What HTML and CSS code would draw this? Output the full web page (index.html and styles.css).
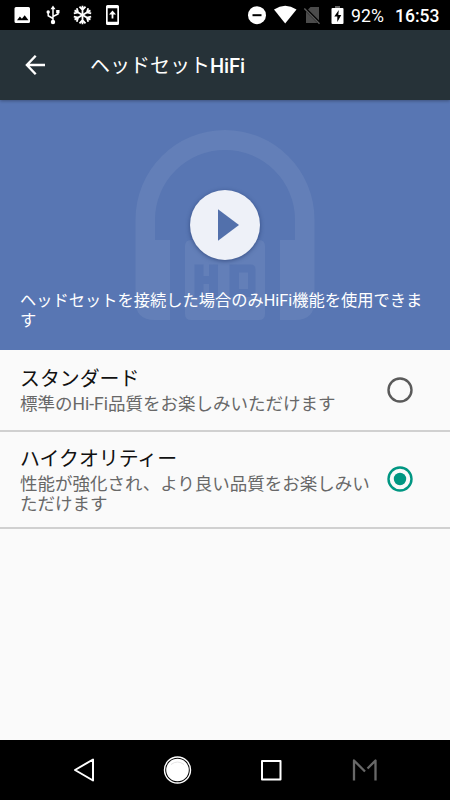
FILE: index.html
```html
<!DOCTYPE html>
<html lang="ja">
<head>
<meta charset="utf-8">
<title>ヘッドセットHiFi</title>
<link rel="stylesheet" href="styles.css">
</head>
<body>
<div class="screen">
  <header class="status">
    <svg class="status-icons" width="130" height="30" viewBox="0 0 130 30">
      <path fill="#fff" fill-rule="evenodd" d="M16 7h12.500q1.500 0 1.500 1.500v13q0 1.500-1.500 1.500H16q-1.500 0-1.500-1.500v-13Q14.500 7 16 7zM17 20.300h11.500l-3.800-5-2.800 3.400-2-2.300z"/>
      <g fill="none" stroke="#fff" stroke-width="1.500"><path d="M53 8v13M53 18.500l-4.800-2.800V12M53 16.500l5-2.500V11"/></g>
      <path fill="#fff" d="M53 5.500l2.500 3.800h-5zM56.200 10h3.300v3.300h-3.300z"/><circle cx="48.200" cy="12" r="1.700" fill="#fff"/><circle cx="53" cy="22" r="2.200" fill="#fff"/>
      <g fill="none" stroke="#fff" stroke-width="1.800">
        <g id="arm"><path d="M82.500 15V5.800M79.500 6.700l3 3.200 3-3.200"/></g>
        <use href="#arm" transform="rotate(60 82.500 15)"/><use href="#arm" transform="rotate(120 82.500 15)"/><use href="#arm" transform="rotate(180 82.500 15)"/><use href="#arm" transform="rotate(240 82.500 15)"/><use href="#arm" transform="rotate(300 82.500 15)"/>
      </g>
      <path fill="#fff" fill-rule="evenodd" d="M107.500 5h10q1.500 0 1.500 1.500v17q0 1.500-1.500 1.500h-10q-1.500 0-1.500-1.500v-17q0-1.500 1.500-1.500zM107.700 8.300v13.400h9.600V8.300z"/>
      <path fill="#fff" d="M112.500 10.500l3.500 4h-2.600v4h-1.800v-4H109z"/>
    </svg>
    <div class="status-right">
      <svg width="100" height="30" viewBox="246 0 100 30">
        <circle cx="257" cy="15.200" r="9" fill="#fff"/><path d="M252.500 15.200h9" stroke="#000" stroke-width="2"/>
        <path fill="#fff" d="M274 9.500Q285.200 2.200 296.500 9.500L285.200 23.500z"/>
        <path fill="#4b4b4b" d="M310.500 7h8.500v16h-13V11.500z"/><path d="M304 7.500L320 23.500" stroke="#000" stroke-width="3"/><path d="M304.300 8.500L319.500 23.700" stroke="#5b5b5b" stroke-width="1.400"/>
        <path fill="#666" d="M335 6h5v2.500h-5z"/><rect x="331.500" y="8" width="12" height="16" rx="1" fill="#fff"/><path d="M338.800 10l-4.500 6.500h3V22l4-7h-3z"/>
      </svg>
      <span class="battery">92%</span>
      <span class="clock">16:53</span>
    </div>
  </header>
  <div class="appbar">
    <svg class="back" width="22" height="22" viewBox="0 0 22 22"><path d="M20 11H2.500M10.700 1.700L1.900 11l8.800 9.300" fill="none" stroke="#fff" stroke-width="2.400"/></svg>
    <h1>ヘッドセット<span>HiFi</span></h1>
  </div>
  <section class="banner">
    <svg class="art" width="180" height="200" viewBox="135 126 180 200">
      <g fill="#fff" fill-opacity=".065">
        <path d="M135.500 219.500a89.500 89.500 0 0 1 179 0V301q0 19-19 19H280V240h15v-20a70 70 0 0 0-140 0v20h15v80h-15.500q-19 0-19-19z"/>
        <path fill-rule="evenodd" d="M191 240h68q6 0 6 6v68q0 6-6 6h-68q-6 0-6-6v-68q0-6 6-6zM194.500 264.500V297h9v-13h5.500v13h9v-32.500h-9v11.500h-5.500v-11.500zM229.500 264.500V297h21q5 0 5-5v-22.500q0-5-5-5zM239 272.500h9V289h-9z"/>
      </g>
    </svg>
    <button class="play" aria-label="再生"><svg width="70" height="70" viewBox="0 0 70 70"><path d="M28 19.300L49 35 28 50.700z" fill="#5270ab"/></svg></button>
    <p>ヘッドセットを接続した場合のみHiFi機能を使用できます</p>
  </section>
  <main class="options">
    <label class="option">
      <span class="copy"><span class="name">スタンダード</span><span class="desc">標準のHi-Fi品質をお楽しみいただけます</span></span>
      <svg class="radio" width="26" height="26" viewBox="0 0 26 26"><circle class="ring" cx="13" cy="13" r="11.500"/></svg>
    </label>
    <label class="option tall">
      <span class="copy"><span class="name">ハイクオリティー</span><span class="desc">性能が強化され、より良い品質をお楽しみいただけます</span></span>
      <svg class="radio checked" width="26" height="26" viewBox="0 0 26 26"><circle class="ring" cx="13" cy="13" r="11.500"/><circle class="dot" cx="13" cy="13" r="6.200"/></svg>
    </label>
  </main>
  <nav class="navbar">
    <svg width="450" height="60" viewBox="0 740 450 60">
      <g fill="none" stroke="#fff" stroke-width="2" stroke-linejoin="round">
        <path d="M93 759.500v21L75 770z"/>
        <circle cx="177.500" cy="770" r="13" stroke-width="1.400"/>
        <rect x="262" y="761" width="18.500" height="18.500"/>
        <path d="M354 780.500V760.500L365 771.500M367.500 768.500L375.500 760.500v20" stroke="#686868" stroke-width="2.300"/>
      </g>
      <circle cx="177.500" cy="770" r="11.300" fill="#fff"/><path d="M171 764.500q6.500-5 13 0" fill="none" stroke="#ddd" stroke-width=".8"/>
    </svg>
  </nav>
</div>
</body>
</html>
```
FILE: styles.css
```css
* { box-sizing: border-box; }
body { margin: 0; font-family: Roboto, "Noto Sans CJK JP", sans-serif; }
h1, p { margin: 0; font-weight: 400; }
svg { display: block; flex: none; }
.screen { width: 450px; height: 800px; display: flex; flex-direction: column; background: #fafafa; overflow: hidden; }
.status { height: 30px; flex: none; display: flex; justify-content: space-between; background: #000; color: #fff; }
.status-right { display: flex; width: 204px; line-height: 32px; }
.battery { width: 49px; padding-left: 5px; font-size: 17.7px; white-space: nowrap; }
.clock { width: 45px; font-size: 17.5px; font-weight: 500; white-space: nowrap; }
.appbar { height: 70px; flex: none; display: flex; align-items: center; padding-left: 25px; background: #263238; color: #fff; position: relative; z-index: 1; box-shadow: 0 1px 3px rgba(0, 0, 0, .3); }
.appbar h1 { margin-left: 43px; font-family: "Noto Sans CJK JP", sans-serif; font-size: 20px; line-height: 30px; white-space: nowrap; }
.appbar h1 span { font-family: Roboto, sans-serif; font-weight: 500; letter-spacing: -.1px; }
.banner { height: 250px; flex: none; position: relative; background: #5876b3; color: #fff; padding: 90px 20px 0; }
.art { position: absolute; left: 135px; top: 26px; }
.play { display: block; position: relative; width: 70px; height: 70px; margin: 0 auto; padding: 0; border: 0; border-radius: 50%; background: #eef1f8; box-shadow: 0 1px 4px rgba(20, 40, 90, .55); }
.banner p { position: relative; margin-top: 31px; font-size: 16.25px; line-height: 19.5px; width: 408px; }
.option { height: 82px; display: flex; justify-content: space-between; padding: 18px 37px 0 20px; border-bottom: 2px solid #d0d0d0; }
.option.tall { height: 97px; padding-top: 16px; }
.copy { width: 352px; }
.name, .desc { display: block; }
.name { font-size: 19.9px; line-height: 24px; color: #111; }
.desc { font-size: 17.500px; line-height: 20px; margin-top: 2px; color: #686868; }
.radio { margin-top: 9px; color: #5a5a5a; }
.tall .radio { margin-top: 18px; }
.radio.checked { color: #009682; }
.ring { fill: none; stroke: currentColor; stroke-width: 2.4px; }
.dot { fill: currentColor; }
.navbar { margin-top: auto; height: 60px; background: #000; }
```
